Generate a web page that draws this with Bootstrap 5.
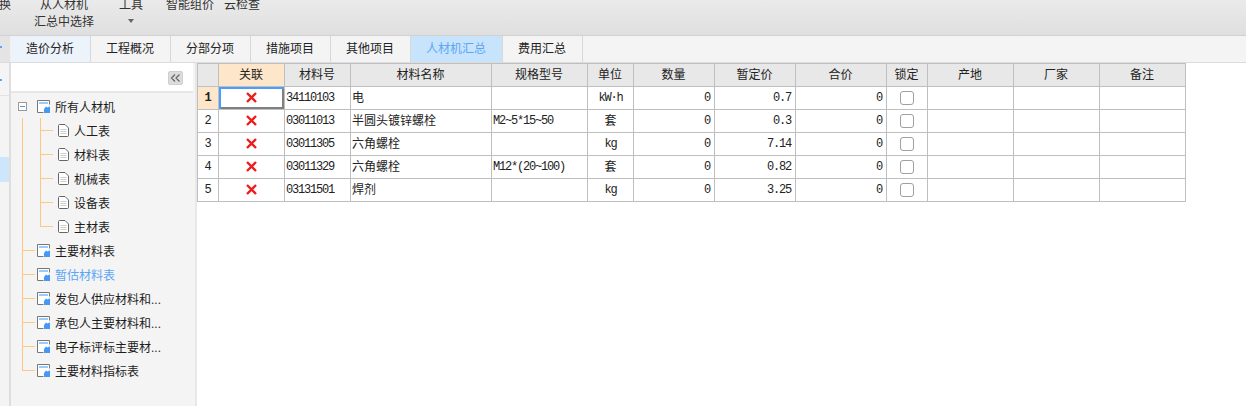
<!DOCTYPE html>
<html lang="zh-CN">
<head>
  <meta charset="UTF-8">
  <title>人材机汇总</title>
  <link href="https://cdn.jsdelivr.net/npm/bootstrap@5.3.3/dist/css/bootstrap.min.css" rel="stylesheet">
  <style>
    html, body { height: 406px; overflow: hidden; }
    body { font-family: "Liberation Sans", "Noto Sans CJK SC", sans-serif; font-size: 12px; color: #222; background: #fff; }

    /* ribbon */
    .ribbon { height: 36px; overflow: hidden; background: linear-gradient(#eaeaea, #dfdfdf); border-bottom: 1px solid #d2d2d2; color: #333; line-height: 16px; }
    .rb-item { margin-top: -3px; text-align: center; flex: none; white-space: nowrap; }
    .rb-cut { width: 12px; margin-left: -1px; }
    .rb-people { width: 60px; margin-left: 23px; }
    .rb-line2 { margin-top: 1px; }
    .rb-tool { width: 24px; margin-left: 25px; }
    .rb-smart { margin-left: 23px; }
    .rb-cloud { margin-left: 10px; }
    .rb-caret { width: 0; height: 0; margin: 6px auto 0; border: 3px solid transparent; border-top: 4px solid #666; }

    /* tabs */
    .tabbar { height: 27px; background: #f4f4f4; border-bottom: 1px solid #dcdcdc; }
    .tab-lead { width: 11px; height: 26px; background: linear-gradient(#5aa6f6, #5aa6f6) 0 10px / 2px 2px no-repeat #e4e4e4; border-right: 1px solid #f0f0f0; }
    .tabbar .nav-link { height: 26px; padding: 0 1px 0 0; width: 80px; text-align: center; line-height: 26px; color: #222; font-size: 12px; border-right: 1px solid #d8d8d8; }
    .tabbar .nav-link.tab-first { background: #edf3fb; }
    .tabbar .nav-link.active { width: 92px; background: #c8e4fc; color: #5aa6f6; }

    /* left */
    .work { height: 343px; }
    .side-strip { width: 11px; flex: none; background: #f4f4f4; border-right: 2px solid #dedede; }
    .strip-gap { height: 33px; border-bottom: 1px solid #e2e2e2; background: linear-gradient(#5aa6f6, #5aa6f6) 0 16px / 2px 2px no-repeat; }
    .strip-gap2 { height: 61px; }
    .strip-sel { height: 25px; background: #cde6fb; }
    .side-tree { width: 186px; flex: none; background: #f4f4f4; border-right: 2px solid #e8e8e8; }
    .tree-head { height: 30px; margin-right: 2px; background: #fff; border-bottom: 2px solid #e6e6e6; padding: 8px 10px 0 0; }
    .fold-btn { width: 15px; height: 14px; padding: 0; background: #dcdcdc; border: 1px solid #cfcfcf; border-radius: 2px; line-height: 0; }
    .tree-body { padding: 1px 0 0 7px; }
    .tree-row { height: 24px; color: #1c1c1c; line-height: 24px; white-space: nowrap; }
    .tree-row.is-on { color: #5aa6f6; }
    .tree-label { padding-top: 3px; margin-left: 5px; font-size: 12px; }
    .tree-box { width: 9px; height: 9px; margin-right: 10px; flex: none; border: 1px solid #9a9a9a; background: linear-gradient(#4a9ee8, #4a9ee8) center / 5px 1px no-repeat #fff; }
    .ln-v, .ln-t, .ln-l { height: 24px; flex: none; background-repeat: no-repeat; }
    .ln-v { width: 18px; background-image: linear-gradient(#ffc880, #ffc880); background-size: 1px 24px; }
    .ln-t { background-image: linear-gradient(#ffc880, #ffc880), linear-gradient(#ffc880, #ffc880); background-size: 1px 24px, 13px 1px; background-position: 0 0, 0 12px; }
    .ln-l { background-image: linear-gradient(#ffc880, #ffc880), linear-gradient(#ffc880, #ffc880); background-size: 1px 13px, 13px 1px; background-position: 0 0, 0 12px; }
    .ml-out { margin-left: 4px; }
    .w-out { width: 15px; }
    .w-in { width: 18px; }
    .tree-ico { flex: none; display: block; }

    /* grid */
    .grid-wrap { flex: none; }
    .mat-grid { width: 989px; table-layout: fixed; border-collapse: collapse; margin: 0; --bs-table-border-color: #bfbfbf; font-size: 12px; }
    .mat-grid > * > tr { height: 23px; }
    .mat-grid th, .mat-grid td { padding: 1px 3px 0; height: 23px; line-height: 21px; border: 1px solid #bfbfbf; color: #222; font-weight: 400; white-space: nowrap; overflow: hidden; }
    .mat-grid thead th { background: #e8e8e8; text-align: center; padding: 1px 1px 0 0; }
    .mat-grid thead th.hd-on, .mat-grid tbody th.hd-on { background: #fde6c9; }
    .mat-grid tbody th { text-align: center; padding: 1px 0 0; background: #fff; font-family: "Liberation Mono", monospace; }
    .mat-grid tbody th.hd-on { font-weight: 700; }
    .mono { font-family: "Liberation Mono", "Noto Sans CJK SC", monospace; font-size: 12px; letter-spacing: -1.2px; }
    .mat-grid td.code-cell { padding-left: 1px; }
    .mat-grid td.name-cell { padding-left: 1px; }
    .mat-grid td.unit-cell { text-align: center; padding-left: 0; padding-right: 0; }
    .mat-grid td.num-cell { text-align: right; padding-right: 4px; }
    .mat-grid td.mark-cell, .mat-grid td.lock-cell { text-align: center; padding-left: 0; padding-right: 0; }
    .mat-grid td.cell-focus { box-shadow: inset 2px 2px 0 #4a9eff, inset -2px -2px 0 #808080; }
    .mark-cell svg { display: inline-block; vertical-align: -1px; }
    .lock-check { width: 14px; height: 14px; margin: 3px 0 0; border: 1px solid #a0a0a0; border-radius: 2px; display: inline-block; vertical-align: top; }
    .c-a { width: 21px; } .c-b { width: 66px; } .c-c { width: 141px; } .c-d { width: 96px; }
    .c-e { width: 46px; } .c-f { width: 81px; } .c-g { width: 91px; } .c-h { width: 41px; } .c-i { width: 86px; }
  </style>
</head>
<body>
  <svg width="0" height="0" class="d-block">
    <defs>
      <symbol id="ico-file" viewBox="0 0 11 13">
        <path d="M.5 1.500a1 1 0 0 1 1-1H7L10.500 4v7.500a1 1 0 0 1-1 1h-8a1 1 0 0 1-1-1z" fill="#fff" stroke="#666"/>
        <path d="M2.500 5.500h6M2.500 7.500h6M2.500 9.500h6" stroke="#ccc"/>
      </symbol>
      <symbol id="ico-sheet" viewBox="0 0 13 13">
        <path d="M6.500 12.500H.5V.5h12v4" fill="#fff" stroke="#777"/>
        <path d="M2 2h9v2H2z" fill="#9ccdfa"/>
        <path d="M7 9l2-2.500 1.500 1L13 6.500V13H7z" fill="#4499f5"/>
      </symbol>
      <symbol id="ico-x" viewBox="0 0 11 11">
        <path d="M1 1l9 9M10 1l-9 9" stroke="#f01a1a" stroke-width="2.400" fill="none"/>
      </symbol>
    </defs>
  </svg>

  <div class="ribbon d-flex align-items-start">
    <div class="rb-item rb-cut">换</div>
    <div class="rb-item rb-people">从人材机<div class="rb-line2">汇总中选择</div></div>
    <div class="rb-item rb-tool">工具<div class="rb-caret"></div></div>
    <div class="rb-item rb-smart">智能组价</div>
    <div class="rb-item rb-cloud">云检查</div>
  </div>

  <ul class="nav tabbar">
    <li class="tab-lead"></li>
    <li class="nav-item"><a class="nav-link tab-first" href="#">造价分析</a></li>
    <li class="nav-item"><a class="nav-link" href="#">工程概况</a></li>
    <li class="nav-item"><a class="nav-link" href="#">分部分项</a></li>
    <li class="nav-item"><a class="nav-link" href="#">措施项目</a></li>
    <li class="nav-item"><a class="nav-link" href="#">其他项目</a></li>
    <li class="nav-item"><a class="nav-link active" href="#">人材机汇总</a></li>
    <li class="nav-item"><a class="nav-link" href="#">费用汇总</a></li>
  </ul>

  <div class="work d-flex">
    <div class="side-strip">
      <div class="strip-gap"></div>
      <div class="strip-gap2"></div>
      <div class="strip-sel"></div>
    </div>

    <div class="side-tree">
      <div class="tree-head d-flex justify-content-end">
        <button class="fold-btn d-flex align-items-center justify-content-center" type="button">
          <svg width="11" height="10" viewBox="0 0 11 10"><path d="M5 1.500L1.500 5 5 8.500M9.500 1.500L6 5l3.500 3.500" fill="none" stroke="#666" stroke-width="1.200"/></svg>
        </button>
      </div>
      <div class="tree-body">
        <div class="tree-row d-flex align-items-center"><span class="tree-box"></span><svg class="tree-ico" width="13" height="13"><use href="#ico-sheet"/></svg><span class="tree-label">所有人材机</span></div>
        <div class="tree-row d-flex align-items-center"><span class="ln-v ml-out"></span><span class="ln-t w-in"></span><svg class="tree-ico" width="11" height="13"><use href="#ico-file"/></svg><span class="tree-label">人工表</span></div>
        <div class="tree-row d-flex align-items-center"><span class="ln-v ml-out"></span><span class="ln-t w-in"></span><svg class="tree-ico" width="11" height="13"><use href="#ico-file"/></svg><span class="tree-label">材料表</span></div>
        <div class="tree-row d-flex align-items-center"><span class="ln-v ml-out"></span><span class="ln-t w-in"></span><svg class="tree-ico" width="11" height="13"><use href="#ico-file"/></svg><span class="tree-label">机械表</span></div>
        <div class="tree-row d-flex align-items-center"><span class="ln-v ml-out"></span><span class="ln-t w-in"></span><svg class="tree-ico" width="11" height="13"><use href="#ico-file"/></svg><span class="tree-label">设备表</span></div>
        <div class="tree-row d-flex align-items-center"><span class="ln-v ml-out"></span><span class="ln-l w-in"></span><svg class="tree-ico" width="11" height="13"><use href="#ico-file"/></svg><span class="tree-label">主材表</span></div>
        <div class="tree-row d-flex align-items-center"><span class="ln-t w-out ml-out"></span><svg class="tree-ico" width="13" height="13"><use href="#ico-sheet"/></svg><span class="tree-label">主要材料表</span></div>
        <div class="tree-row is-on d-flex align-items-center"><span class="ln-t w-out ml-out"></span><svg class="tree-ico" width="13" height="13"><use href="#ico-sheet"/></svg><span class="tree-label">暂估材料表</span></div>
        <div class="tree-row d-flex align-items-center"><span class="ln-t w-out ml-out"></span><svg class="tree-ico" width="13" height="13"><use href="#ico-sheet"/></svg><span class="tree-label">发包人供应材料和...</span></div>
        <div class="tree-row d-flex align-items-center"><span class="ln-t w-out ml-out"></span><svg class="tree-ico" width="13" height="13"><use href="#ico-sheet"/></svg><span class="tree-label">承包人主要材料和...</span></div>
        <div class="tree-row d-flex align-items-center"><span class="ln-t w-out ml-out"></span><svg class="tree-ico" width="13" height="13"><use href="#ico-sheet"/></svg><span class="tree-label">电子标评标主要材...</span></div>
        <div class="tree-row d-flex align-items-center"><span class="ln-l w-out ml-out"></span><svg class="tree-ico" width="13" height="13"><use href="#ico-sheet"/></svg><span class="tree-label">主要材料指标表</span></div>
      </div>
    </div>

    <div class="grid-wrap">
      <table class="table table-bordered mat-grid">
        <thead>
          <tr>
            <th class="c-a"></th>
            <th class="c-b hd-on">关联</th>
            <th class="c-b">材料号</th>
            <th class="c-c">材料名称</th>
            <th class="c-d">规格型号</th>
            <th class="c-e">单位</th>
            <th class="c-f">数量</th>
            <th class="c-f">暂定价</th>
            <th class="c-g">合价</th>
            <th class="c-h">锁定</th>
            <th class="c-i">产地</th>
            <th class="c-i">厂家</th>
            <th class="c-i">备注</th>
          </tr>
        </thead>
        <tbody>
          <tr>
            <th class="hd-on">1</th>
            <td class="mark-cell cell-focus"><svg width="11" height="11"><use href="#ico-x"/></svg></td>
            <td class="code-cell mono">34110103</td>
            <td class="name-cell">电</td>
            <td class="code-cell mono"></td>
            <td class="unit-cell mono">kW·h</td>
            <td class="num-cell mono">0</td>
            <td class="num-cell mono">0.7</td>
            <td class="num-cell mono">0</td>
            <td class="lock-cell"><input class="form-check-input lock-check" type="checkbox"></td>
            <td></td><td></td><td></td>
          </tr>
          <tr>
            <th>2</th>
            <td class="mark-cell"><svg width="11" height="11"><use href="#ico-x"/></svg></td>
            <td class="code-cell mono">03011013</td>
            <td class="name-cell">半圆头镀锌螺栓</td>
            <td class="code-cell mono">M2~5*15~50</td>
            <td class="unit-cell">套</td>
            <td class="num-cell mono">0</td>
            <td class="num-cell mono">0.3</td>
            <td class="num-cell mono">0</td>
            <td class="lock-cell"><input class="form-check-input lock-check" type="checkbox"></td>
            <td></td><td></td><td></td>
          </tr>
          <tr>
            <th>3</th>
            <td class="mark-cell"><svg width="11" height="11"><use href="#ico-x"/></svg></td>
            <td class="code-cell mono">03011305</td>
            <td class="name-cell">六角螺栓</td>
            <td class="code-cell mono"></td>
            <td class="unit-cell mono">kg</td>
            <td class="num-cell mono">0</td>
            <td class="num-cell mono">7.14</td>
            <td class="num-cell mono">0</td>
            <td class="lock-cell"><input class="form-check-input lock-check" type="checkbox"></td>
            <td></td><td></td><td></td>
          </tr>
          <tr>
            <th>4</th>
            <td class="mark-cell"><svg width="11" height="11"><use href="#ico-x"/></svg></td>
            <td class="code-cell mono">03011329</td>
            <td class="name-cell">六角螺栓</td>
            <td class="code-cell mono">M12*(20~100)</td>
            <td class="unit-cell">套</td>
            <td class="num-cell mono">0</td>
            <td class="num-cell mono">0.82</td>
            <td class="num-cell mono">0</td>
            <td class="lock-cell"><input class="form-check-input lock-check" type="checkbox"></td>
            <td></td><td></td><td></td>
          </tr>
          <tr>
            <th>5</th>
            <td class="mark-cell"><svg width="11" height="11"><use href="#ico-x"/></svg></td>
            <td class="code-cell mono">03131501</td>
            <td class="name-cell">焊剂</td>
            <td class="code-cell mono"></td>
            <td class="unit-cell mono">kg</td>
            <td class="num-cell mono">0</td>
            <td class="num-cell mono">3.25</td>
            <td class="num-cell mono">0</td>
            <td class="lock-cell"><input class="form-check-input lock-check" type="checkbox"></td>
            <td></td><td></td><td></td>
          </tr>
        </tbody>
      </table>
    </div>
  </div>

  <script src="https://cdn.jsdelivr.net/npm/bootstrap@5.3.3/dist/js/bootstrap.bundle.min.js"></script>
</body>
</html>
